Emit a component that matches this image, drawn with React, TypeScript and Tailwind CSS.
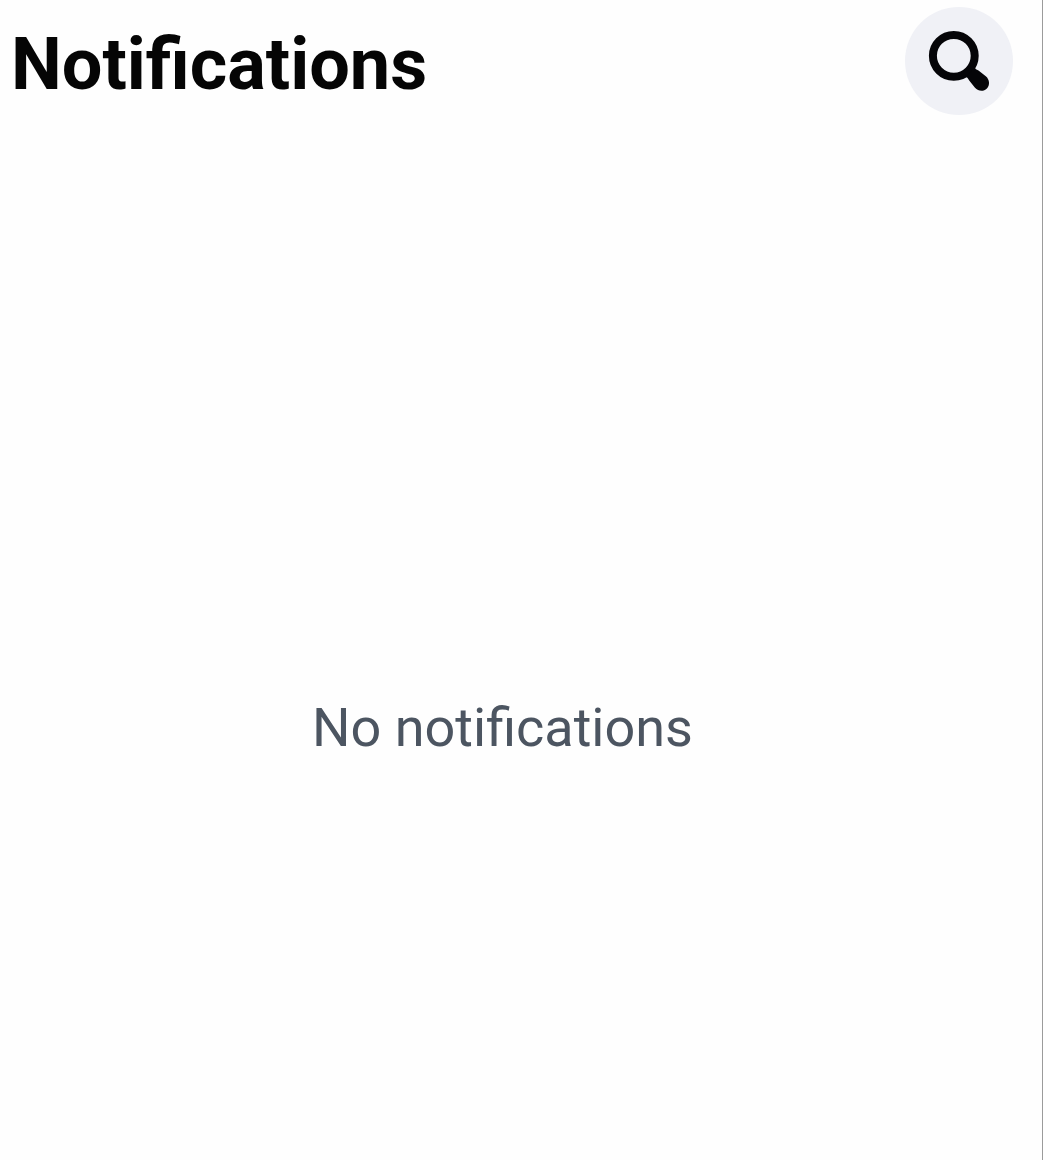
export default function App() {
  return (
    <div className="flex h-[1160px] w-[1043px] flex-col border-r border-[#9b9b9b] bg-[#fefefe] font-['Roboto',sans-serif]">
      <header className="flex h-[122px] items-center justify-between pl-[11px] pr-[29px]">
        <h1 className="mt-[8px] text-[72px] leading-[84px] font-bold text-[#050505]">Notifications</h1>
        <button aria-label="Search" className="flex size-[108px] items-center justify-center rounded-full bg-[#f0f1f6]">
          <svg viewBox="0 0 108 108" className="size-full" fill="none">
            <circle cx="48.8" cy="48.8" r="20.9" stroke="#050508" strokeWidth="8" />
            <path
              d="M69.5 60.5Q70.5 62.3 73.5 63.6L80.8 69.2C84.8 72.6 85.1 78.2 81.9 81.5C78.6 84.8 73.4 84.5 70 80.8L64.4 73.8Q62.6 70.6 60.8 69.5Z"
              fill="#050508"
            />
          </svg>
        </button>
      </header>
      <main className="flex flex-1 justify-center pt-[574px] pr-[37px]">
        <p className="text-[54px] leading-[64px] text-[#4c5561]">No notifications</p>
      </main>
    </div>
  );
}
